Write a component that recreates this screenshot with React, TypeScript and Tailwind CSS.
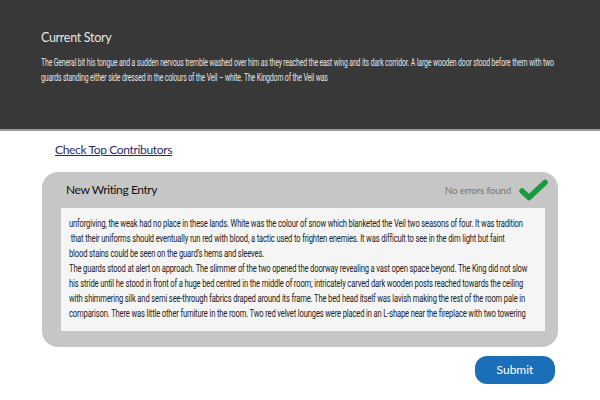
import React from "react";

const storyLines = [
  "The General bit his tongue and a sudden nervous tremble washed over him as they reached the east wing and its dark corridor. A large wooden door stood before them with two",
  "guards standing either side dressed in the colours of the Veil \u2013 white. The Kingdom of the Veil was",
];

const entryLines = [
  "unforgiving, the weak had no place in these lands. White was the colour of snow which blanketed the Veil two seasons of four. It was tradition",
  "\u00a0that their uniforms should eventually run red with blood, a tactic used to frighten enemies. It was difficult to see in the dim light but faint",
  "blood stains could be seen on the guard\u2019s hems and sleeves.",
  "The guards stood at alert on approach. The slimmer of the two opened the doorway revealing a vast open space beyond. The King did not slow",
  "his stride until he stood in front of a huge bed centred in the middle of room; intricately carved dark wooden posts reached towards the ceiling",
  "with shimmering silk and semi see-through fabrics draped around its frame. The bed head itself was lavish making the rest of the room pale in",
  "comparison. There was little other furniture in the room. Two red velvet lounges were placed in an L-shape near the fireplace with two towering",
];

export default function App() {
  return (
    <div className="w-[600px] h-[400px] bg-white font-['Lato',sans-serif] overflow-hidden">
      <div className="h-[131px] bg-[#383838] border-b-2 border-[#9c9c9c] px-[41px] pt-[29px]">
        <div className="text-[12.5px] tracking-[-0.3px] text-[#e8e8e8]">Current Story</div>
        {/* condensed look: squeeze Roboto horizontally */}
        <p className="mt-[7px] w-[144.93%] origin-left scale-x-[0.69] whitespace-nowrap text-[10px] leading-[15px] text-[#e4e4e4] font-['Roboto',sans-serif] tracking-[-0.2px]">
          {storyLines.map((l, i) => (
            <span key={i} className="block">{l}</span>
          ))}
        </p>
      </div>

      <div className="px-[42px]">
        <a href="#" className="block ml-[13px] mt-[10px] text-[12px] tracking-[-0.35px] text-[#2c2a6e] underline">
          Check Top Contributors
        </a>

        <div className="mt-[13px] h-[175px] rounded-[16px] bg-[#c6c6c6] pl-[19px] pr-[13px]">
          <div className="flex h-[36px] items-center justify-between pl-[5px]">
            <span className="text-[12px] tracking-[-0.4px] text-[#111]">New Writing Entry</span>
            <div className="-mr-[3px] flex items-center gap-[8px]">
              <span className="text-[10px] tracking-[-0.25px] text-[#777]">No errors found</span>
              <Check />
            </div>
          </div>
          <div className="h-[123px] bg-[#f5f5f5] px-[8px] pt-[8px] overflow-hidden">
            <p className="w-[131.6%] origin-left scale-x-[0.76] whitespace-nowrap text-[10px] leading-[15px] text-[#222] font-['Roboto',sans-serif] tracking-[-0.2px]">
              {entryLines.map((l, i) => (
                <span key={i} className="block">{l}</span>
              ))}
            </p>
          </div>
        </div>

        <div className="mt-[9px] flex justify-end pr-[3px]">
          <button className="h-[28px] w-[80px] rounded-[12px] bg-[#1b6fb9] text-[12px] text-white">
            Submit
          </button>
        </div>
      </div>
    </div>
  );
}

function Check() {
  return (
    <svg width="29" height="22" viewBox="0 0 29 22">
      <path
        d="M3 12 L10 18.5 L26 3.5"
        fill="none"
        stroke="#1a9a3e"
        strokeWidth="5.5"
        strokeLinecap="round"
        strokeLinejoin="round"
      />
    </svg>
  );
}
